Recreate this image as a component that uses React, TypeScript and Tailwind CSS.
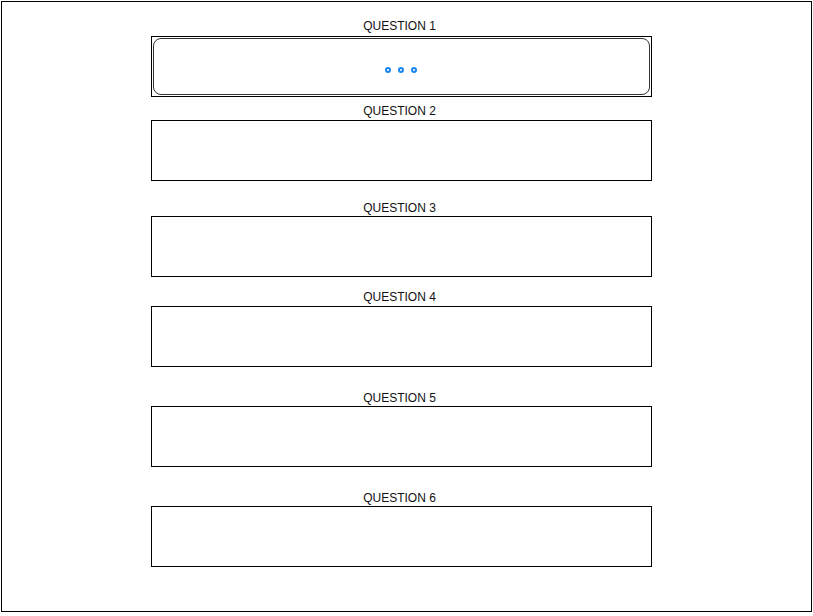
import React from "react";

export default function App() {
  const lbl = "w-[497px] h-[14px] text-center text-[12px] leading-[14px] text-[#111]";
  return (
    <div className="w-[813px] h-[616px] bg-white" style={{ fontFamily: '"Liberation Sans", Arial, sans-serif' }}>
      <div className="ml-[1px] mt-[1px] w-[811px] h-[611px] border border-black flex flex-col pl-[149px]">
        <div className={`mt-[17px] ${lbl}`}>QUESTION 1</div>
        <div className="mt-[3px] w-[501px] h-[61px] border border-black p-[1px]">
          <div className="h-full w-full border border-[#333] rounded-[8px] flex items-center justify-center gap-[7px] pt-[6px] pr-[2px]">
            <span className="w-[6px] h-[6px] rounded-full border-2 border-[#1a84f0]" />
            <span className="w-[6px] h-[6px] rounded-full border-2 border-[#1a84f0]" />
            <span className="w-[6px] h-[6px] rounded-full border-2 border-[#1a84f0]" />
          </div>
        </div>
        <div className={`mt-[7px] ${lbl}`}>QUESTION 2</div>
        <div className="mt-[2px] w-[501px] h-[61px] border border-black" />
        <div className={`mt-[20px] ${lbl}`}>QUESTION 3</div>
        <div className="mt-[1px] w-[501px] h-[61px] border border-black" />
        <div className={`mt-[13px] ${lbl}`}>QUESTION 4</div>
        <div className="mt-[2px] w-[501px] h-[61px] border border-black" />
        <div className={`mt-[24px] ${lbl}`}>QUESTION 5</div>
        <div className="mt-[1px] w-[501px] h-[61px] border border-black" />
        <div className={`mt-[24px] ${lbl}`}>QUESTION 6</div>
        <div className="mt-[1px] w-[501px] h-[61px] border border-black" />
      </div>
    </div>
  );
}
